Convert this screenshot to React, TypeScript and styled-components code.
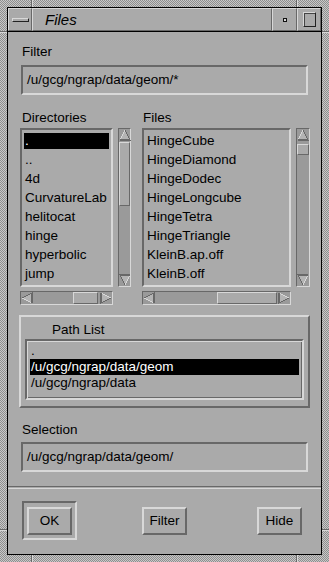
import React from 'react';
import styled, { createGlobalStyle } from 'styled-components';

const BG = '#aaaaaa';
const LIGHT = '#d8d8d8';
const DARK = '#686868';
const TROUGH = '#9a9a9a';

const GlobalStyle = createGlobalStyle`
  html, body {
    margin: 0;
    padding: 0;
    background: ${BG};
  }
  body {
    font-family: "Liberation Sans", Arial, Helvetica, sans-serif;
    font-size: 13.5px;
    color: #000;
  }
`;

const Frame = styled.div`
  width: 329px;
  height: 562px;
  box-sizing: border-box;
  padding: 7px;
  background:
    linear-gradient(${DARK}, ${DARK}) 31px 0 / 1px 100% no-repeat,
    linear-gradient(${LIGHT}, ${LIGHT}) 32px 0 / 1px 100% no-repeat,
    linear-gradient(${DARK}, ${DARK}) 296px 0 / 1px 100% no-repeat,
    linear-gradient(${LIGHT}, ${LIGHT}) 297px 0 / 1px 100% no-repeat,
    linear-gradient(${DARK}, ${DARK}) 0 31px / 100% 1px no-repeat,
    linear-gradient(${LIGHT}, ${LIGHT}) 0 32px / 100% 1px no-repeat,
    linear-gradient(${DARK}, ${DARK}) 0 529px / 100% 1px no-repeat,
    linear-gradient(${LIGHT}, ${LIGHT}) 0 530px / 100% 1px no-repeat,
    repeating-conic-gradient(#c8c8c8 0 25%, #8e8e8e 0 50%) 0 0 / 2px 2px;
`;

const Window = styled.div`
  height: 100%;
  box-sizing: border-box;
  border: 1px solid #000;
  background: ${BG};
  display: flex;
  flex-direction: column;
`;

const TitleBar = styled.div`
  height: 23px;
  flex: none;
  display: flex;
  border-bottom: 1px solid #000;
`;

const TitleCell = styled.div<{ $w?: number }>`
  ${(p) => (p.$w ? `width: ${p.$w}px; flex: none;` : 'flex: 1;')}
  box-sizing: border-box;
  border: 1px solid;
  border-color: ${LIGHT} ${DARK} ${DARK} ${LIGHT};
  display: flex;
  align-items: center;
  justify-content: center;
`;

const TitleText = styled.div`
  flex: 1;
  padding-left: 12px;
  font-size: 15px;
  font-style: italic;
  line-height: 21px;
`;

const MenuBar = styled.div`
  width: 15px;
  height: 2px;
  border: 1px solid;
  border-color: ${LIGHT} #222 #222 ${LIGHT};
  background: ${BG};
`;

const MinDot = styled.div`
  width: 2px;
  height: 2px;
  border: 1px solid #111;
  background: ${LIGHT};
`;

const MaxBox = styled.div`
  width: 11px;
  height: 13px;
  border: 1px solid;
  border-color: ${LIGHT} #222 #222 ${LIGHT};
  box-shadow: inset 1px 1px 0 #444;
`;

const Body = styled.div`
  padding: 0 13px;
  display: flex;
  flex-direction: column;
`;

const Label = styled.div<{ $top: number; $indent?: number }>`
  margin-top: ${(p) => p.$top}px;
  padding-left: ${(p) => p.$indent ?? 1}px;
  height: 16px;
  line-height: 16px;
  white-space: nowrap;
`;

const TextField = styled.div<{ $top: number }>`
  margin-top: ${(p) => p.$top}px;
  height: 30px;
  box-sizing: border-box;
  border: 2px solid;
  border-color: ${DARK} ${LIGHT} ${LIGHT} ${DARK};
  padding-left: 4px;
  line-height: 26px;
  white-space: nowrap;
  overflow: hidden;
`;

const Columns = styled.div`
  display: flex;
  gap: 11px;
  margin: 0 -2px 0 -1px;
`;

const Column = styled.div`
  display: flex;
  flex-direction: column;
`;

const ListGrid = styled.div<{ $list: number; $sb: number }>`
  margin-top: 2px;
  display: grid;
  grid-template-columns: ${(p) => p.$list}px ${(p) => p.$sb}px;
  grid-template-rows: 159px 14px;
  column-gap: 5px;
  row-gap: 4px;
`;

const ListBox = styled.div`
  box-sizing: border-box;
  border: 2px solid;
  border-color: ${DARK} ${LIGHT} ${LIGHT} ${DARK};
  padding: 1px 2px;
  overflow: hidden;
`;

const Item = styled.div<{ $selected?: boolean; $h: number }>`
  height: ${(p) => p.$h}px;
  line-height: ${(p) => p.$h}px;
  padding-left: 1px;
  white-space: nowrap;
  color: ${(p) => (p.$selected ? '#fff' : '#000')};
  background: ${(p) =>
    p.$selected ? 'linear-gradient(#000, #000) 0 50% / 100% 16px no-repeat' : 'none'};
`;

const Trough = styled.div<{ $vertical: boolean }>`
  box-sizing: border-box;
  border: 1px solid;
  border-color: ${DARK} ${LIGHT} ${LIGHT} ${DARK};
  background: ${TROUGH};
  display: flex;
  flex-direction: ${(p) => (p.$vertical ? 'column' : 'row')};
`;

const Thumb = styled.div<{ $vertical: boolean; $start: number; $size: number }>`
  box-sizing: border-box;
  flex: none;
  border: 1px solid;
  border-color: ${LIGHT} ${DARK} ${DARK} ${LIGHT};
  background: ${BG};
  ${(p) =>
    p.$vertical
      ? `margin-top: ${p.$start}px; height: ${p.$size}px;`
      : `margin-left: ${p.$start}px; width: ${p.$size}px;`}
`;

const Spacer = styled.div`
  flex: 1;
`;

const ArrowSvg = styled.svg<{ $rot: number }>`
  flex: none;
  display: block;
  transform: rotate(${(p) => p.$rot}deg);
`;

const Arrow: React.FC<{ dir: 'up' | 'down' | 'left' | 'right' }> = ({ dir }) => {
  const rot = { up: 0, right: 90, down: 180, left: 270 }[dir];
  return (
    <ArrowSvg $rot={rot} width={12} height={12} viewBox="0 0 12 12" shapeRendering="crispEdges">
      <polygon points="6,1 11,11 1,11" fill="#b4b4b4" />
      <polyline points="1,11 6,1" fill="none" stroke={LIGHT} strokeWidth={1.2} />
      <polyline points="6,1 11,11 1,11" fill="none" stroke={DARK} strokeWidth={1.2} />
    </ArrowSvg>
  );
};

const ScrollBar: React.FC<{ vertical: boolean; start: number; size: number }> = ({
  vertical,
  start,
  size,
}) => (
  <Trough $vertical={vertical}>
    <Arrow dir={vertical ? 'up' : 'left'} />
    <Thumb $vertical={vertical} $start={start} $size={size} />
    <Spacer />
    <Arrow dir={vertical ? 'down' : 'right'} />
  </Trough>
);

const PathFrame = styled.div`
  margin: 10px -2px 0;
  height: 93px;
  box-sizing: border-box;
  border: 2px solid;
  border-color: ${LIGHT} ${DARK} ${DARK} ${LIGHT};
  padding: 4px 4px 0;
  display: flex;
  flex-direction: column;
`;

const PathList = styled.div`
  margin-top: 1px;
  height: 61px;
  box-sizing: border-box;
  border: 2px solid;
  border-color: ${DARK} ${LIGHT} ${LIGHT} ${DARK};
  box-shadow: inset 1px 1px 0 ${LIGHT}, inset -1px -1px 0 ${DARK};
  padding: 2px 3px 0 3px;
  overflow: hidden;
`;

const Separator = styled.div`
  margin-top: 14px;
  height: 1px;
  border-top: 1px solid ${DARK};
  border-bottom: 1px solid ${LIGHT};
`;

const ButtonRow = styled.div`
  padding: 12px 14px 0;
  display: flex;
  justify-content: space-between;
`;

const ButtonSlot = styled.div<{ $default?: boolean }>`
  width: 55px;
  height: 39px;
  box-sizing: border-box;
  border: 2px solid;
  border-color: ${(p) =>
    p.$default ? `${DARK} ${LIGHT} ${LIGHT} ${DARK}` : 'transparent'};
  display: flex;
  align-items: center;
  justify-content: center;
`;

const Button = styled.div`
  width: 45px;
  height: 28px;
  box-sizing: border-box;
  border: 2px solid;
  border-color: ${LIGHT} ${DARK} ${DARK} ${LIGHT};
  display: flex;
  align-items: center;
  justify-content: center;
`;

const dirs = ['.', '..', '4d', 'CurvatureLab', 'helitocat', 'hinge', 'hyperbolic', 'jump'];
const files = [
  'HingeCube',
  'HingeDiamond',
  'HingeDodec',
  'HingeLongcube',
  'HingeTetra',
  'HingeTriangle',
  'KleinB.ap.off',
  'KleinB.off',
];
const paths = ['.', '/u/gcg/ngrap/data/geom', '/u/gcg/ngrap/data'];

const App: React.FC = () => {
  return (
    <>
      <GlobalStyle />
      <Frame>
        <Window>
          <TitleBar>
            <TitleCell $w={24}>
              <MenuBar />
            </TitleCell>
            <TitleCell>
              <TitleText>Files</TitleText>
            </TitleCell>
            <TitleCell $w={25}>
              <MinDot />
            </TitleCell>
            <TitleCell $w={24}>
              <MaxBox />
            </TitleCell>
          </TitleBar>
          <Body>
            <Label $top={12}>Filter</Label>
            <TextField $top={5}>/u/gcg/ngrap/data/geom/*</TextField>
            <Columns>
              <Column>
                <Label $top={15} $indent={2}>
                  Directories
                </Label>
                <ListGrid $list={93} $sb={13}>
                  <ListBox>
                    {dirs.map((d, i) => (
                      <Item key={d} $h={19} $selected={i === 0}>
                        {d}
                      </Item>
                    ))}
                  </ListBox>
                  <ScrollBar vertical start={1} size={64} />
                  <ScrollBar vertical={false} start={40} size={25} />
                </ListGrid>
              </Column>
              <Column>
                <Label $top={15} $indent={1}>
                  Files
                </Label>
                <ListGrid $list={149} $sb={14}>
                  <ListBox>
                    {files.map((f) => (
                      <Item key={f} $h={19}>
                        {f}
                      </Item>
                    ))}
                  </ListBox>
                  <ScrollBar vertical start={3} size={11} />
                  <ScrollBar vertical={false} start={62} size={60} />
                </ListGrid>
              </Column>
            </Columns>
            <PathFrame>
              <Label $top={1} $indent={27}>
                Path List
              </Label>
              <PathList>
                {paths.map((p, i) => (
                  <Item key={p} $h={16} $selected={i === 1}>
                    {p}
                  </Item>
                ))}
              </PathList>
            </PathFrame>
            <Label $top={14}>Selection</Label>
            <TextField $top={4}>/u/gcg/ngrap/data/geom/</TextField>
          </Body>
          <Separator />
          <ButtonRow>
            <ButtonSlot $default>
              <Button>OK</Button>
            </ButtonSlot>
            <ButtonSlot>
              <Button>Filter</Button>
            </ButtonSlot>
            <ButtonSlot>
              <Button>Hide</Button>
            </ButtonSlot>
          </ButtonRow>
        </Window>
      </Frame>
    </>
  );
};

export default App;
